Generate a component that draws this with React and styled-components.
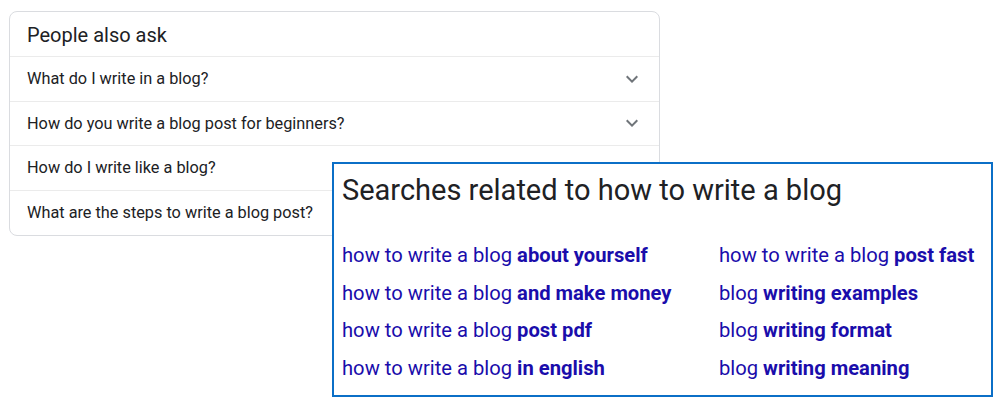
import React from 'react';
import styled, { createGlobalStyle } from 'styled-components';

const GlobalStyle = createGlobalStyle`
  body {
    margin: 0;
    background: #ffffff;
    font-family: Roboto, "Liberation Sans", Arial, sans-serif;
  }
`;

const questions = [
  'What do I write in a blog?',
  'How do you write a blog post for beginners?',
  'How do I write like a blog?',
  'What are the steps to write a blog post?',
];

const related = [
  ['how to write a blog', 'about yourself'],
  ['how to write a blog', 'post fast'],
  ['how to write a blog', 'and make money'],
  ['blog', 'writing examples'],
  ['how to write a blog', 'post pdf'],
  ['blog', 'writing format'],
  ['how to write a blog', 'in english'],
  ['blog', 'writing meaning'],
];

function Chevron() {
  return (
    <svg width="24" height="24" viewBox="0 0 24 24">
      <path d="M16.59 8.59L12 13.17 7.41 8.59 6 10l6 6 6-6z" fill="#70757a" />
    </svg>
  );
}

function App() {
  return (
    <Page>
      <GlobalStyle />
      <AskCard>
        <AskTitle>People also ask</AskTitle>
        {questions.map((q, i) => (
          <Question key={q} last={i === questions.length - 1}>
            <span>{q}</span>
            <Chevron />
          </Question>
        ))}
      </AskCard>

      <RelatedBox>
        <RelatedTitle>Searches related to how to write a blog</RelatedTitle>
        <LinkGrid>
          {related.map(([plain, bold]) => (
            <SearchLink key={plain + bold}>
              {plain} <b>{bold}</b>
            </SearchLink>
          ))}
        </LinkGrid>
      </RelatedBox>
    </Page>
  );
}

const Page = styled.div`
  position: relative;
  width: 1006px;
  height: 409px;
  padding: 11px 0 0 9px;
  box-sizing: border-box;
`;

const AskCard = styled.div`
  width: 651px;
  box-sizing: border-box;
  border: 1px solid #dadce0;
  border-radius: 8px;
  overflow: hidden;
`;

const AskTitle = styled.div`
  height: 45px;
  box-sizing: border-box;
  padding: 11px 0 0 17px;
  font-size: 20px;
  line-height: 24px;
  color: #202124;
  border-bottom: 1px solid #ebebeb;
`;

const Question = styled.div`
  display: flex;
  align-items: center;
  justify-content: space-between;
  height: 44.5px;
  box-sizing: border-box;
  padding: 0 15px 0 17px;
  font-size: 16.3px;
  color: #202124;
  border-bottom: ${p => (p.last ? 'none' : '1px solid #ebebeb')};
`;

const RelatedBox = styled.div`
  position: absolute;
  left: 332px;
  top: 162px;
  width: 661px;
  height: 235px;
  box-sizing: border-box;
  border: 2px solid #0b6fc7;
  background: #ffffff;
  padding: 9px 0 0 8px;
`;

const RelatedTitle = styled.div`
  font-size: 29px;
  line-height: 34px;
  color: #202124;
  margin-bottom: 35px;
`;

const LinkGrid = styled.div`
  display: grid;
  grid-template-columns: 377px 1fr;
  grid-auto-rows: 37.5px;
`;

const SearchLink = styled.div`
  font-size: 20.2px;
  line-height: 26px;
  color: #1a0dab;
  white-space: nowrap;

  b {
    font-weight: 700;
  }
`;

export default App;
